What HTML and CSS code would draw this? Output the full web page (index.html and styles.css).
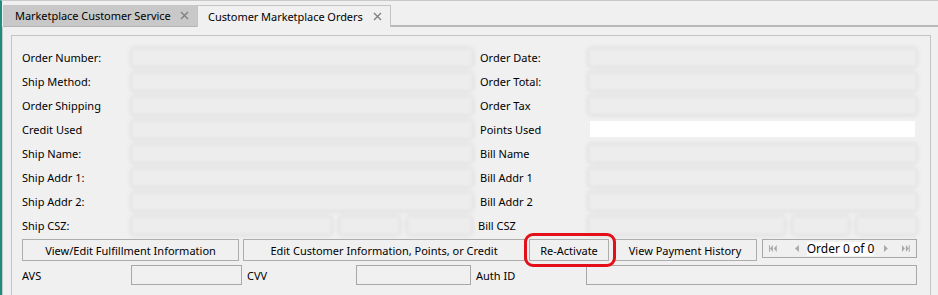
FILE: index.html
```html
<!DOCTYPE html>
<html lang="en">
<head>
  <meta charset="UTF-8" />
  <title>Customer Marketplace Orders</title>
  <link rel="stylesheet" href="styles.css">
</head>
<body>
  <div class="window">
    <div class="tabs">
      <div class="tab">
        <span>Marketplace Customer Service</span>
        <svg class="close" width="9" height="9" viewBox="0 0 9 9"><path d="M1 1L8 8M8 1L1 8" /></svg>
      </div>
      <div class="tab active">
        <span>Customer Marketplace Orders</span>
        <svg class="close" width="9" height="9" viewBox="0 0 9 9"><path d="M1 1L8 8M8 1L1 8" /></svg>
      </div>
      <div class="tab-fill"></div>
    </div>

    <div class="content">
      <div class="group">
        <div class="fields">
          <label>Order Number:</label><div class="blur"></div>
          <label class="r">Order Date:</label><div class="blur"></div>

          <label>Ship Method:</label><div class="blur"></div>
          <label class="r">Order Total:</label><div class="blur"></div>

          <label>Order Shipping</label><div class="blur"></div>
          <label class="r">Order Tax</label><div class="blur"></div>

          <label>Credit Used</label><div class="blur"></div>
          <label class="r">Points Used</label><div class="plain"></div>

          <label>Ship Name:</label><div class="blur"></div>
          <label class="r">Bill Name</label><div class="blur"></div>

          <label>Ship Addr 1:</label><div class="blur"></div>
          <label class="r">Bill Addr 1</label><div class="blur"></div>

          <label>Ship Addr 2:</label><div class="blur"></div>
          <label class="r">Bill Addr 2</label><div class="blur"></div>

          <label>Ship CSZ:</label>
          <div class="csz left-csz"><div class="blur"></div><div class="blur"></div><div class="blur"></div></div>
          <label class="r csz-label">Bill CSZ</label>
          <div class="csz right-csz"><div class="blur"></div><div class="blur"></div><div class="blur"></div></div>
        </div>

        <div class="actions">
          <button class="btn w-fulfil">View/Edit Fulfillment Information</button>
          <button class="btn w-edit">Edit Customer Information, Points, or Credit</button>
          <button class="btn w-react highlight">Re-Activate</button>
          <button class="btn w-history">View Payment History</button>
          <div class="navigator">
            <svg width="8" height="7" viewBox="0 0 8 7"><rect x="0" y="0" width="1" height="7"/><path d="M4 0L1 3.5L4 7Z M8 0L5 3.5L8 7Z"/></svg>
            <svg width="4" height="7" viewBox="0 0 4 7"><path d="M4 0L0 3.5L4 7Z"/></svg>
            <span class="pos">Order 0 of 0</span>
            <svg width="4" height="7" viewBox="0 0 4 7"><path d="M0 0L4 3.5L0 7Z"/></svg>
            <svg width="8" height="7" viewBox="0 0 8 7"><path d="M0 0L3 3.5L0 7Z M4 0L7 3.5L4 7Z"/><rect x="7" y="0" width="1" height="7"/></svg>
          </div>
        </div>

        <div class="auth">
          <label class="a-avs">AVS</label><div class="box b-avs"></div>
          <label class="a-cvv">CVV</label><div class="box b-cvv"></div>
          <label class="a-auth">Auth ID</label><div class="box b-auth"></div>
        </div>
      </div>
    </div>
  </div>
</body>
</html>
```

FILE: styles.css
```css
body, html {
  margin: 0;
  padding: 0;
  background: #f0f0f0;
  font-family: 'Noto Sans', 'Open Sans', sans-serif;
  font-size: 11px;
  color: #000;
  overflow: hidden;
}

.window {
  height: 295px;
  border-left: 2px solid #1f8c7d;
  border-top: 1px solid #c9c9c9;
  box-sizing: border-box;
}

/* tab strip */
.tabs {
  display: flex;
  height: 26px;
  padding-top: 4px;
  padding-left: 1px;
  box-sizing: border-box;
}

.tab {
  width: 194px;
  display: flex;
  align-items: center;
  justify-content: space-between;
  padding: 0 8px 0 12px;
  box-sizing: border-box;
  background: #c8c8c8;
  border-bottom: 1px solid #b4b4b4;
  white-space: nowrap;
  font-size: 11px;
  letter-spacing: -0.05px;
}

.tab.active {
  background: #f0f0f0;
  border: 1px solid #c3c3c3;
  border-bottom: none;
  padding-left: 10px;
}

.tab-fill {
  flex: 1;
  border-bottom: 2px solid #b9b9b9;
}

.close path {
  stroke: #808080;
  stroke-width: 1.4;
  fill: none;
}

/* main area */
.content {
  height: 268px;
  border-left: 1px solid #c8c8c8;
  padding: 8px 7px 0 8px;
  box-sizing: border-box;
}

.group {
  height: 270px;
  border: 1px solid #c4c4c4;
  border-bottom: none;
  padding: 9px 12px 0 10px;
  box-sizing: border-box;
}

.fields {
  display: grid;
  grid-template-columns: 110px 340px 8px 109px 327px;
  grid-auto-rows: 24px;
  align-items: center;
}

.fields label {
  white-space: nowrap;
}

.fields label.r {
  grid-column: 4;
}

.fields label.csz-label {
  margin-left: -2px;
}

.blur {
  height: 17px;
  background: #ededed;
  border-radius: 3px;
  box-shadow: 0 0 3px 2px #dedede;
  filter: blur(1.5px);
}

.plain {
  height: 16px;
  background: #fff;
  margin-left: 1px;
  margin-right: 1px;
}

.csz {
  display: flex;
  gap: 9px;
}

.left-csz .blur:nth-child(1) { width: 199px; }
.left-csz .blur:nth-child(2) { width: 59px; }
.left-csz .blur:nth-child(3) { width: 63px; }
.right-csz .blur:nth-child(1) { width: 196px; }
.right-csz .blur:nth-child(2) { width: 55px; }
.right-csz .blur:nth-child(3) { width: 59px; }

/* buttons */
.actions {
  display: flex;
  align-items: flex-start;
  gap: 4px;
  margin-top: 2px;
}

.btn {
  height: 22px;
  padding: 0;
  font-family: inherit;
  font-size: 11px;
  color: #000;
  background: #f0f0f0;
  border: 1px solid #adadad;
  border-radius: 0;
}

.w-fulfil { width: 217px; }
.w-edit { width: 282px; }
.w-react { width: 80px; }
.w-history { width: 144px; }

.highlight {
  position: relative;
}

.highlight::after {
  content: "";
  position: absolute;
  left: -6px;
  right: -8px;
  top: -7px;
  bottom: -7px;
  border: 3px solid #e3101a;
  border-radius: 9px;
}

.navigator {
  width: 155px;
  height: 19px;
  margin-left: 1px;
  border: 1px solid #a8a8a8;
  box-sizing: border-box;
  display: flex;
  align-items: center;
  padding: 0 6px;
}

.navigator svg {
  fill: #a8a8a8;
}

.navigator svg:nth-child(1) { margin-right: 18px; }
.navigator svg:nth-child(2) { margin-right: 8px; }
.navigator svg:nth-child(4) { margin-left: 10px; margin-right: 14px; }

.pos {
  background: #fff;
  width: 70px;
  text-align: center;
  line-height: 14px;
  font-size: 12px;
}

/* auth row */
.auth {
  display: flex;
  align-items: center;
  margin-top: 4px;
  height: 20px;
}

.auth label { white-space: nowrap; }
.a-avs { width: 109px; }
.a-cvv { width: 109px; margin-left: 5px; }
.a-auth { width: 110px; margin-left: 5px; }

.box {
  height: 20px;
  border: 1px solid #a8a8a8;
  box-sizing: border-box;
}

.b-avs { width: 111px; }
.b-cvv { width: 115px; }
.b-auth { width: 331px; }
```
